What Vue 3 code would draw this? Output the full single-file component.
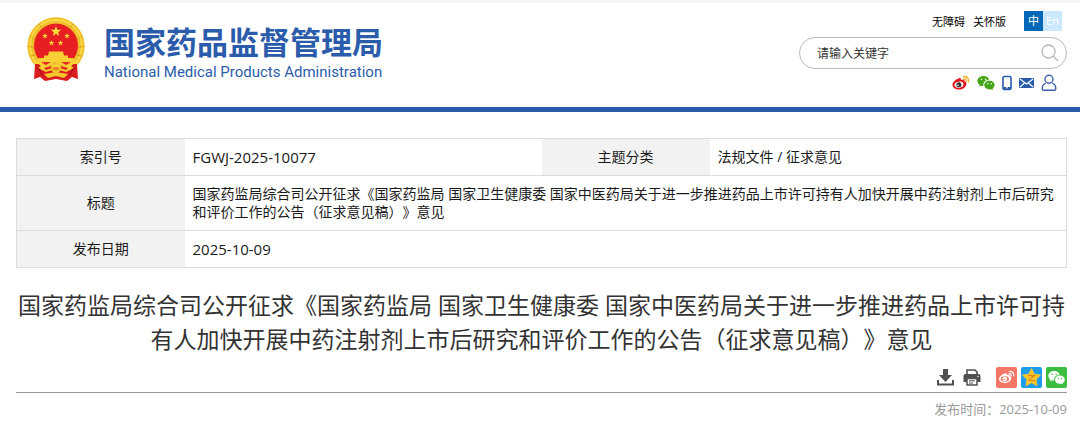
<template>
  <div class="page">
    <header class="header">
      <a class="brand" href="#">
        <svg class="emblem" viewBox="0 0 58 64" aria-hidden="true">
          <circle cx="29" cy="29" r="28.7" fill="#f0c02b" />
          <circle cx="29" cy="29" r="26" fill="none" stroke="#f9d848" stroke-width="2" />
          <path d="M3 19l5 4M1 29l6 2M3 39l6-1M55 19l-5 4M57 29l-6 2M55 39l-6-1M12 7l3 4M46 7l-3 4" stroke="#d99d1e" />
          <circle cx="29" cy="28.500" r="22" fill="#e71e22" />
          <polygon :points="star(29, 14.5, 5.5)" fill="#ffe03a" />
          <polygon v-for="s in smallStars" :key="s[0]" :points="star(s[0], s[1], 3)" fill="#ffd937" />
          <path d="M8 47l-1 15 6-2 5 4 11-2 11 2 5-4 6 2-1-15z" fill="#d91c20" />
          <path d="M22 34.500h14l1 4h4v4.500H17v-4.500h4z" fill="#f7cf35" />
          <path d="M12 41h34l3 4-5 4 3 2-8 4-10-3-10 3-8-4 3-2-5-4z" fill="#f7cf35" />
          <path d="M14 45h10l-5 3zM44 45H34l5 3zM17 51l7-2 1 2-6 2zM41 51l-7-2-1 2 6 2z" fill="#e02a22" />
          <circle cx="29" cy="51" r="5" fill="#f7cf35" stroke="#d9901f" stroke-dasharray="1 1" />
          <path d="M25 52c1-3 7-3 8 0l-4 2z" fill="#e88a20" />
          <path d="M17 57l12-2 12 2-4 4-8-2-8 2z" fill="#f3c62c" />
          <path d="M10 50c3 3 5 5 5 9M48 50c-3 3-5 5-5 9" fill="none" stroke="#b01217" stroke-width="1.200" />
        </svg>
        <span class="brand-text">
          <span class="brand-cn">国家药品监督管理局</span>
          <span class="brand-en">National Medical Products Administration</span>
        </span>
      </a>

      <div class="tools">
        <div class="top-links">
          <a href="#">无障碍</a>
          <a href="#">关怀版</a>
          <div class="lang">
            <button type="button" class="lang-cn">中</button>
            <button type="button" class="lang-en">En</button>
          </div>
        </div>
        <form class="search" @submit.prevent>
          <input v-model="keyword" type="text" placeholder="请输入关键字" aria-label="请输入关键字" />
          <button type="submit" aria-label="搜索">
            <svg width="18" height="18" viewBox="0 0 18 18" fill="none" stroke="#b5b5b5" stroke-width="1.3">
              <circle cx="7.5" cy="7.5" r="6.5" />
              <path d="M12 12l5 5" />
            </svg>
          </button>
        </form>
        <div class="social">
          <a href="#" aria-label="微博">
            <svg width="18" height="16" viewBox="0 0 18 16">
              <path d="M6.500 3.500C8 2.600 9.300 3 8.900 5c2.500-1 4.100-.6 3.500 1.300 1.500.5 2.200 1.500 2 2.700-.4 3.500-3.700 5.500-7.400 5.500S.5 12.500 .5 9.500C.5 7.500 3.500 4.500 6.500 3.500z" fill="#e3151c" />
              <ellipse cx="7" cy="9.700" rx="4.500" ry="3" transform="rotate(-8 7 9.700)" fill="#fff" />
              <circle cx="6.900" cy="9.800" r="2.500" fill="#333" />
              <circle cx="6.100" cy="10.300" r=".8" fill="#fff" />
              <path d="M11.500 1.700c3.200-.7 5.800 1.900 4.900 5.100M12 4c1.500-.3 2.600.8 2.200 2.200" fill="none" stroke="#f5b023" stroke-width="1.400" stroke-linecap="round" />
            </svg>
          </a>
          <a href="#" aria-label="微信">
            <svg width="18" height="16" viewBox="0 0 22 19"><path :d="wechat" fill="#45a518" fill-rule="evenodd" /></svg>
          </a>
          <a href="#" aria-label="手机版">
            <svg width="10" height="16" viewBox="0 0 10 16">
              <rect x="1" y="1.500" width="8" height="13" rx="1.300" fill="#fff" stroke="#2b5cab" stroke-width="1.600" />
              <path d="M1 12h8v2.500H1z" fill="#2b5cab" />
              <circle cx="5" cy="12.700" r=".8" fill="#fff" />
            </svg>
          </a>
          <a href="#" aria-label="邮箱">
            <svg width="15" height="16" viewBox="0 0 15 16">
              <rect x="0" y="3" width="15" height="10" rx="1" fill="#2b5cab" />
              <path d="M1 4l6.500 5L14 4M1 12l4.500-4M14 12L9.500 8" fill="none" stroke="#fff" stroke-width="1.100" />
            </svg>
          </a>
          <a href="#" aria-label="个人中心">
            <svg width="16" height="18" viewBox="0 0 16 18" fill="none" stroke="#3f61b0" stroke-width="1.400">
              <circle cx="8" cy="5.300" r="4" />
              <path d="M4.800 9.300C2.300 10 1.200 12 1.200 14.500c0 1.300.5 1.800 1.600 1.800h10.400c1.100 0 1.600-.5 1.600-1.800 0-2.500-1.100-4.500-3.600-5.200" />
            </svg>
          </a>
        </div>
      </div>
    </header>

    <main class="content">
      <table class="info">
        <colgroup>
          <col class="col-label" />
          <col class="col-value" />
          <col class="col-label" />
          <col class="col-value" />
        </colgroup>
        <tbody>
          <tr>
            <th scope="row">索引号</th>
            <td class="code">FGWJ-2025-10077</td>
            <th scope="row">主题分类</th>
            <td>法规文件 / 征求意见</td>
          </tr>
          <tr>
            <th scope="row">标题</th>
            <td colspan="3">{{ title }}</td>
          </tr>
          <tr>
            <th scope="row">发布日期</th>
            <td class="code" colspan="3">2025-10-09</td>
          </tr>
        </tbody>
      </table>

      <h1 class="title">{{ title }}</h1>

      <div class="actions">
        <button type="button" aria-label="下载">
          <svg width="17" height="17" viewBox="0 0 17 17" fill="#505050">
            <path d="M6 0h5v6h4l-6.500 7L2 6h4z" />
            <path d="M0 11h2v3.500h13V11h2v5.500H0z" />
          </svg>
        </button>
        <button type="button" class="print" aria-label="打印">
          <svg width="18" height="17" viewBox="0 0 18 17">
            <path d="M4 5V1h8l2 2v2" fill="#fff" stroke="#505050" stroke-width="1.600" />
            <path d="M2.500 5h13A2 2 0 0 1 17.500 7v6H14V10H4v3H.5V7a2 2 0 0 1 2-2z" fill="#505050" />
            <path d="M4 9.500h10V16H4z" fill="#fff" stroke="#505050" stroke-width="1.500" />
            <path d="M6 11.800h6M6 14h4" stroke="#505050" />
            <circle cx="15" cy="7.500" r=".7" fill="#fff" />
          </svg>
        </button>
        <button type="button" aria-label="分享到微博">
          <svg width="21" height="21" viewBox="0 0 21 21">
            <rect width="21" height="21" rx="2" fill="#f57567" />
            <path d="M8.500 6.500c1.500-.7 2.600-.2 2.200 1.400 2.200-.8 3.500-.4 3 1.200 1.300.5 1.800 1.200 1.600 2.300-.5 2.700-3.300 4.600-6.600 4.600-3.200 0-5.700-1.600-5.700-3.900 0-1.900 2.500-4.700 5.500-5.600z" fill="#fff" />
            <ellipse cx="8.900" cy="12" rx="4.200" ry="2.800" fill="#f57567" />
            <circle cx="8.700" cy="12.100" r="2.300" fill="#fff" />
            <circle cx="8.200" cy="12.500" r=".8" fill="#f57567" />
            <path d="M13 4.500c3-.6 5.300 1.700 4.600 4.500M13.300 6.700c1.300-.2 2.300.8 1.900 2" fill="none" stroke="#fff" stroke-width="1.200" stroke-linecap="round" />
          </svg>
        </button>
        <button type="button" aria-label="分享到QQ空间">
          <svg width="21" height="21" viewBox="0 0 21 21">
            <rect width="21" height="21" rx="2" fill="#1e9be9" />
            <polygon :points="star(10.5, 11, 9.3, 0.5)" fill="#fdc72b" stroke="#fdc72b" stroke-linejoin="round" />
            <path d="M7 8.500h6.500L8 13c2 .7 3.500.8 6 .5" fill="none" stroke="#d98a18" stroke-width="1.300" />
          </svg>
        </button>
        <button type="button" aria-label="分享到微信">
          <svg width="21" height="21" viewBox="0 0 21 21">
            <rect width="21" height="21" rx="2" fill="#3cbd40" />
            <path :d="wechat" transform="translate(2 3.300) scale(.78)" fill="#fff" fill-rule="evenodd" />
          </svg>
        </button>
      </div>

      <p class="time">发布时间：2025-10-09</p>
    </main>
  </div>
</template>

<script setup>
import { ref } from 'vue';

const keyword = ref('');
const title = '国家药监局综合司公开征求《国家药监局 国家卫生健康委 国家中医药局关于进一步推进药品上市许可持有人加快开展中药注射剂上市后研究和评价工作的公告（征求意见稿）》意见';

const smallStars = [[18, 19], [40, 19], [24.5, 26], [33.5, 26]];

const wechat = 'M8 1C3.600 1 .500 3.700 .500 7.200c0 2 1 3.700 2.800 4.800l-.7 2.200 2.600-1.300c.900.300 1.700.400 2.700.400-1-4.600 2.500-7.700 7-7.700C14.200 2.800 11.500 1 8 1zM5.500 4a1 1 0 1 1 0 2 1 1 0 0 1 0-2zM10.500 4a1 1 0 1 1 0 2 1 1 0 0 1 0-2zM15.200 6.700c-3.700 0-6.300 2.400-6.300 5.300s2.600 5.300 6.300 5.300c.8 0 1.500-.1 2.200-.3l2.100 1.200-.5-2c1.500-1 2.500-2.500 2.500-4.200 0-2.900-2.600-5.300-6.300-5.300zM13.200 9.400a.9.9 0 1 1 0 1.800.9.9 0 0 1 0-1.800zM17.400 9.400a.9.9 0 1 1 0 1.800.9.9 0 0 1 0-1.800z';

// 五角星顶点
function star(cx, cy, r, inner = 0.4) {
  const points = [];
  for (let i = 0; i < 10; i++) {
    const radius = i % 2 ? r * inner : r;
    const angle = (Math.PI / 5) * i - Math.PI / 2;
    points.push(`${(cx + radius * Math.cos(angle)).toFixed(2)},${(cy + radius * Math.sin(angle)).toFixed(2)}`);
  }
  return points.join(' ');
}
</script>

<style>
body {
  margin: 0;
  background: #fff;
}
</style>

<style scoped>
.page {
  font-family: "Open Sans", "Noto Sans CJK SC", sans-serif;
  font-size: 14px;
  text-spacing-trim: space-all;
  color: #1a1a1a;
  border-top: 3px solid #f4f4f4;
}

a {
  color: inherit;
  text-decoration: none;
}

button {
  padding: 0;
  border: 0;
  background: none;
  font-family: inherit;
  cursor: pointer;
}

svg {
  display: block;
}

.header {
  display: flex;
  justify-content: space-between;
  align-items: flex-start;
  padding: 8px 13px 15px 27px;
  border-bottom: 5px solid #2b5cab;
}

.brand {
  display: flex;
  gap: 19px;
  padding-top: 6px;
  color: #2b5cab;
}

.emblem {
  width: 58px;
  height: 64px;
}

.brand-text {
  display: flex;
  flex-direction: column;
  gap: 2px;
  padding-top: 6px;
}

.brand-cn {
  font-family: "Noto Sans CJK SC", sans-serif;
  font-size: 31px;
  font-weight: 700;
  line-height: 36px;
}

.brand-en {
  font-family: Roboto, sans-serif;
  font-size: 15px;
  line-height: 22px;
}

.tools {
  width: 268px;
}

.top-links {
  display: flex;
  justify-content: flex-end;
  align-items: center;
  gap: 8px;
  padding-right: 5px;
  font-size: 11px;
  color: #000;
}

.lang {
  display: flex;
  margin-left: 10px;
}

.lang button {
  width: 19px;
  height: 20px;
  font-size: 11px;
  line-height: 20px;
  color: #fff;
}

.lang .lang-cn {
  background: #0068b7;
}

.lang .lang-en {
  background: #cce8ff;
}

.search {
  display: flex;
  align-items: center;
  box-sizing: border-box;
  height: 32px;
  margin-top: 6px;
  padding: 0 7px 0 17px;
  border: 1px solid #bbb;
  border-radius: 16px;
}

.search input {
  flex: 1;
  min-width: 0;
  padding: 0;
  border: 0;
  outline: 0;
  background: none;
  font-family: inherit;
  font-size: 12px;
  color: #333;
}

.search input::placeholder {
  color: #333;
  opacity: 1;
}

.social {
  display: flex;
  justify-content: flex-end;
  align-items: center;
  gap: 7px;
  margin-top: 5px;
  padding-right: 10px;
}

.content {
  padding: 26px 13px 0 16px;
}

.info {
  width: 100%;
  table-layout: fixed;
  border-collapse: collapse;
  border: 1px solid #dcdcdc;
}

.col-label {
  width: 16%;
}

.col-value {
  width: 34%;
}

.info tr {
  border-bottom: 1px solid #dcdcdc;
}

.info th,
.info td {
  padding: 9px 8px;
  line-height: 18px;
  vertical-align: middle;
}

.info th {
  background: #f2f2f2;
  font-weight: 400;
  text-align: center;
}

.info .code {
  font-size: 15px;
}

.title {
  margin: 20px 0 11px;
  font-size: 23px;
  font-weight: 400;
  line-height: 34px;
  text-align: center;
  color: #333;
}

.actions {
  display: flex;
  justify-content: flex-end;
  align-items: center;
  gap: 4px;
  padding-bottom: 4px;
  border-bottom: 1px solid #999;
}

.actions .print {
  margin: 0 11px 0 5px;
}

.time {
  margin: 7px 0 0;
  font-size: 13px;
  line-height: 18px;
  text-align: right;
  color: #999;
}
</style>
